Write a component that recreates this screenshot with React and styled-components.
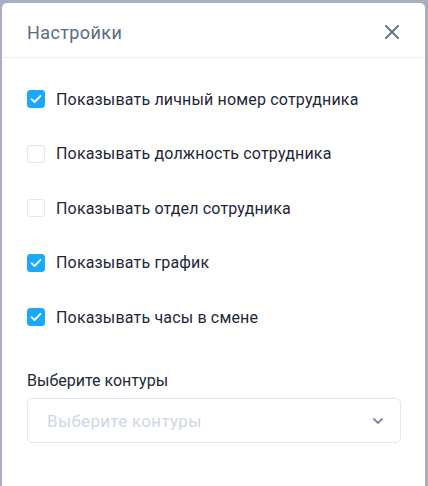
import React, { useState } from 'react'
import styled, { createGlobalStyle } from 'styled-components'

const GlobalStyle = createGlobalStyle`
  html, body {
    margin: 0;
    padding: 0;
    background: #a8b0c0;
    height: 100%;
    overflow: hidden;
  }
  body {
    font-family: Roboto, "Noto Sans", Arial, sans-serif;
  }
`

const Modal = styled.div`
  margin: 3px 3px 0 2px;
  height: 483px;
  background: #ffffff;
  border-radius: 5px 5px 0 0;
  display: flex;
  flex-direction: column;
`

const Header = styled.div`
  height: 55px;
  display: flex;
  align-items: center;
  justify-content: space-between;
  padding: 4px 22px 0 25px;
  box-sizing: border-box;
  border-bottom: 1px solid #eef0f4;
`

const Title = styled.h2`
  margin: 0;
  font-size: 18px;
  letter-spacing: 0.4px;
  font-weight: 400;
  color: #5b6a86;
`

const CloseButton = styled.button`
  border: 0;
  background: none;
  padding: 0;
  width: 22px;
  height: 22px;
  display: flex;
  align-items: center;
  justify-content: center;
  cursor: pointer;
  color: #66758f;
`

const Body = styled.div`
  padding: 32px 24px 0 25px;
  display: flex;
  flex-direction: column;
`

const List = styled.div`
  display: flex;
  flex-direction: column;
  gap: 36.5px;
`

const Row = styled.label`
  display: flex;
  align-items: center;
  gap: 11px;
  height: 18px;
  cursor: pointer;
  font-size: 16px;
  letter-spacing: 0.17px;
  color: #1e2738;
`

const Box = styled.span`
  width: 18px;
  height: 18px;
  box-sizing: border-box;
  border-radius: 3px;
  flex-shrink: 0;
  display: flex;
  align-items: center;
  justify-content: center;
  background: ${p => (p.$checked ? '#19a8fc' : '#ffffff')};
  border: 1px solid ${p => (p.$checked ? '#19a8fc' : '#e1e5ee')};
`

const FieldLabel = styled.div`
  margin-top: 45px;
  font-size: 16px;
  color: #222a38;
`

const Select = styled.div`
  margin-top: 8px;
  height: 45px;
  box-sizing: border-box;
  border: 1px solid #e2e6ee;
  border-radius: 5px;
  display: flex;
  align-items: center;
  justify-content: space-between;
  padding: 0 16px 0 19px;
  cursor: pointer;
`

const Placeholder = styled.span`
  font-size: 17px;
  letter-spacing: 0.3px;
  color: #d0d6e7;
`

const Check = () => (
  <svg width="12" height="10" viewBox="0 0 12 10" fill="none">
    <path d="M1.5 5.2 L4.5 8 L10.5 1.8" stroke="#fff" strokeWidth="1.8" strokeLinecap="round" strokeLinejoin="round" />
  </svg>
)

const options = [
  { label: 'Показывать личный номер сотрудника', checked: true },
  { label: 'Показывать должность сотрудника', checked: false },
  { label: 'Показывать отдел сотрудника', checked: false },
  { label: 'Показывать график', checked: true },
  { label: 'Показывать часы в смене', checked: true },
]

export default function App() {
  const [items, setItems] = useState(options)

  const toggle = i =>
    setItems(items.map((it, j) => (j === i ? { ...it, checked: !it.checked } : it)))

  return (
    <>
      <GlobalStyle />
      <Modal>
        <Header>
          <Title>Настройки</Title>
          <CloseButton aria-label="Закрыть">
            <svg width="16" height="16" viewBox="0 0 16 16">
              <path d="M2 2 L14 14 M14 2 L2 14" stroke="currentColor" strokeWidth="2" strokeLinecap="round" />
            </svg>
          </CloseButton>
        </Header>
        <Body>
          <List>
            {items.map((it, i) => (
              <Row key={it.label} onClick={() => toggle(i)}>
                <Box $checked={it.checked}>{it.checked && <Check />}</Box>
                {it.label}
              </Row>
            ))}
          </List>
          <FieldLabel>Выберите контуры</FieldLabel>
          <Select>
            <Placeholder>Выберите контуры</Placeholder>
            <svg width="12" height="8" viewBox="0 0 12 8">
              <path d="M2 2 L6 6 L10 2" stroke="#7b88a1" strokeWidth="1.8" fill="none" strokeLinecap="round" strokeLinejoin="round" />
            </svg>
          </Select>
        </Body>
      </Modal>
    </>
  )
}
